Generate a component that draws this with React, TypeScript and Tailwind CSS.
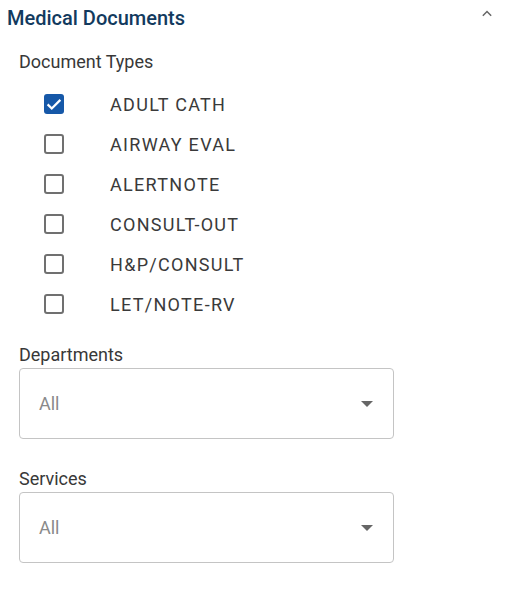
import { useState } from 'react'

const docTypes = ['ADULT CATH', 'AIRWAY EVAL', 'ALERTNOTE', 'CONSULT-OUT', 'H&P/CONSULT', 'LET/NOTE-RV']

function Checkbox({ checked, onChange }: { checked: boolean; onChange: () => void }) {
  return (
    <button
      onClick={onChange}
      className={`w-[20px] h-[20px] rounded-[3px] flex items-center justify-center ${
        checked ? 'bg-[#1658a8]' : 'border-2 border-[#707070] bg-white'
      }`}
    >
      {checked && (
        <svg width="18" height="18" viewBox="0 0 24 24">
          <path d="M3.5 12.5l5.5 5.5L20.5 6.5" fill="none" stroke="white" strokeWidth="3" />
        </svg>
      )}
    </button>
  )
}

function SelectField({ label }: { label: string }) {
  return (
    <div className="flex flex-col">
      <span className="text-[18px] text-[#383838] leading-[22px] ml-[19px] mb-[2px]">{label}</span>
      <div className="ml-[19px] w-[375px] h-[71px] border border-[#c4c4c4] rounded-[4px] flex items-center justify-between pl-[19px] pr-[19px]">
        <span className="text-[18px] text-[#8a8a8a]">All</span>
        <svg width="14" height="8" viewBox="0 0 14 8">
          <path d="M1 1h12L7 7z" fill="#666" />
        </svg>
      </div>
    </div>
  )
}

export default function App() {
  const [checked, setChecked] = useState<string[]>(['ADULT CATH'])

  const toggle = (t: string) =>
    setChecked((c) => (c.includes(t) ? c.filter((x) => x !== t) : [...c, t]))

  return (
    <div className="w-[505px] h-[603px] bg-white font-['Roboto',sans-serif]">
      <div className="flex items-center justify-between h-[36px] pl-[7px] pr-[8px]">
        <h2 className="text-[20px] font-medium text-[#123a5e]">Medical Documents</h2>
        <svg width="20" height="20" viewBox="0 0 24 24" className="-mt-[9px]">
          <path d="M7 14l5-5 5 5" fill="none" stroke="#666" strokeWidth="1.8" />
        </svg>
      </div>
      <div className="text-[18px] text-[#383838] ml-[19px] mt-[15px] leading-[22px]">Document Types</div>
      <div className="flex flex-col mt-[11px]">
        {docTypes.map((t) => (
          <div key={t} className="flex items-center h-[40px] pl-[44px]">
            <Checkbox checked={checked.includes(t)} onChange={() => toggle(t)} />
            <span className="ml-[46px] text-[18px] text-[#3a3a3a] tracking-[1.3px]">{t}</span>
          </div>
        ))}
      </div>
      <div className="mt-[20px]">
        <SelectField label="Departments" />
      </div>
      <div className="mt-[29px]">
        <SelectField label="Services" />
      </div>
    </div>
  )
}
